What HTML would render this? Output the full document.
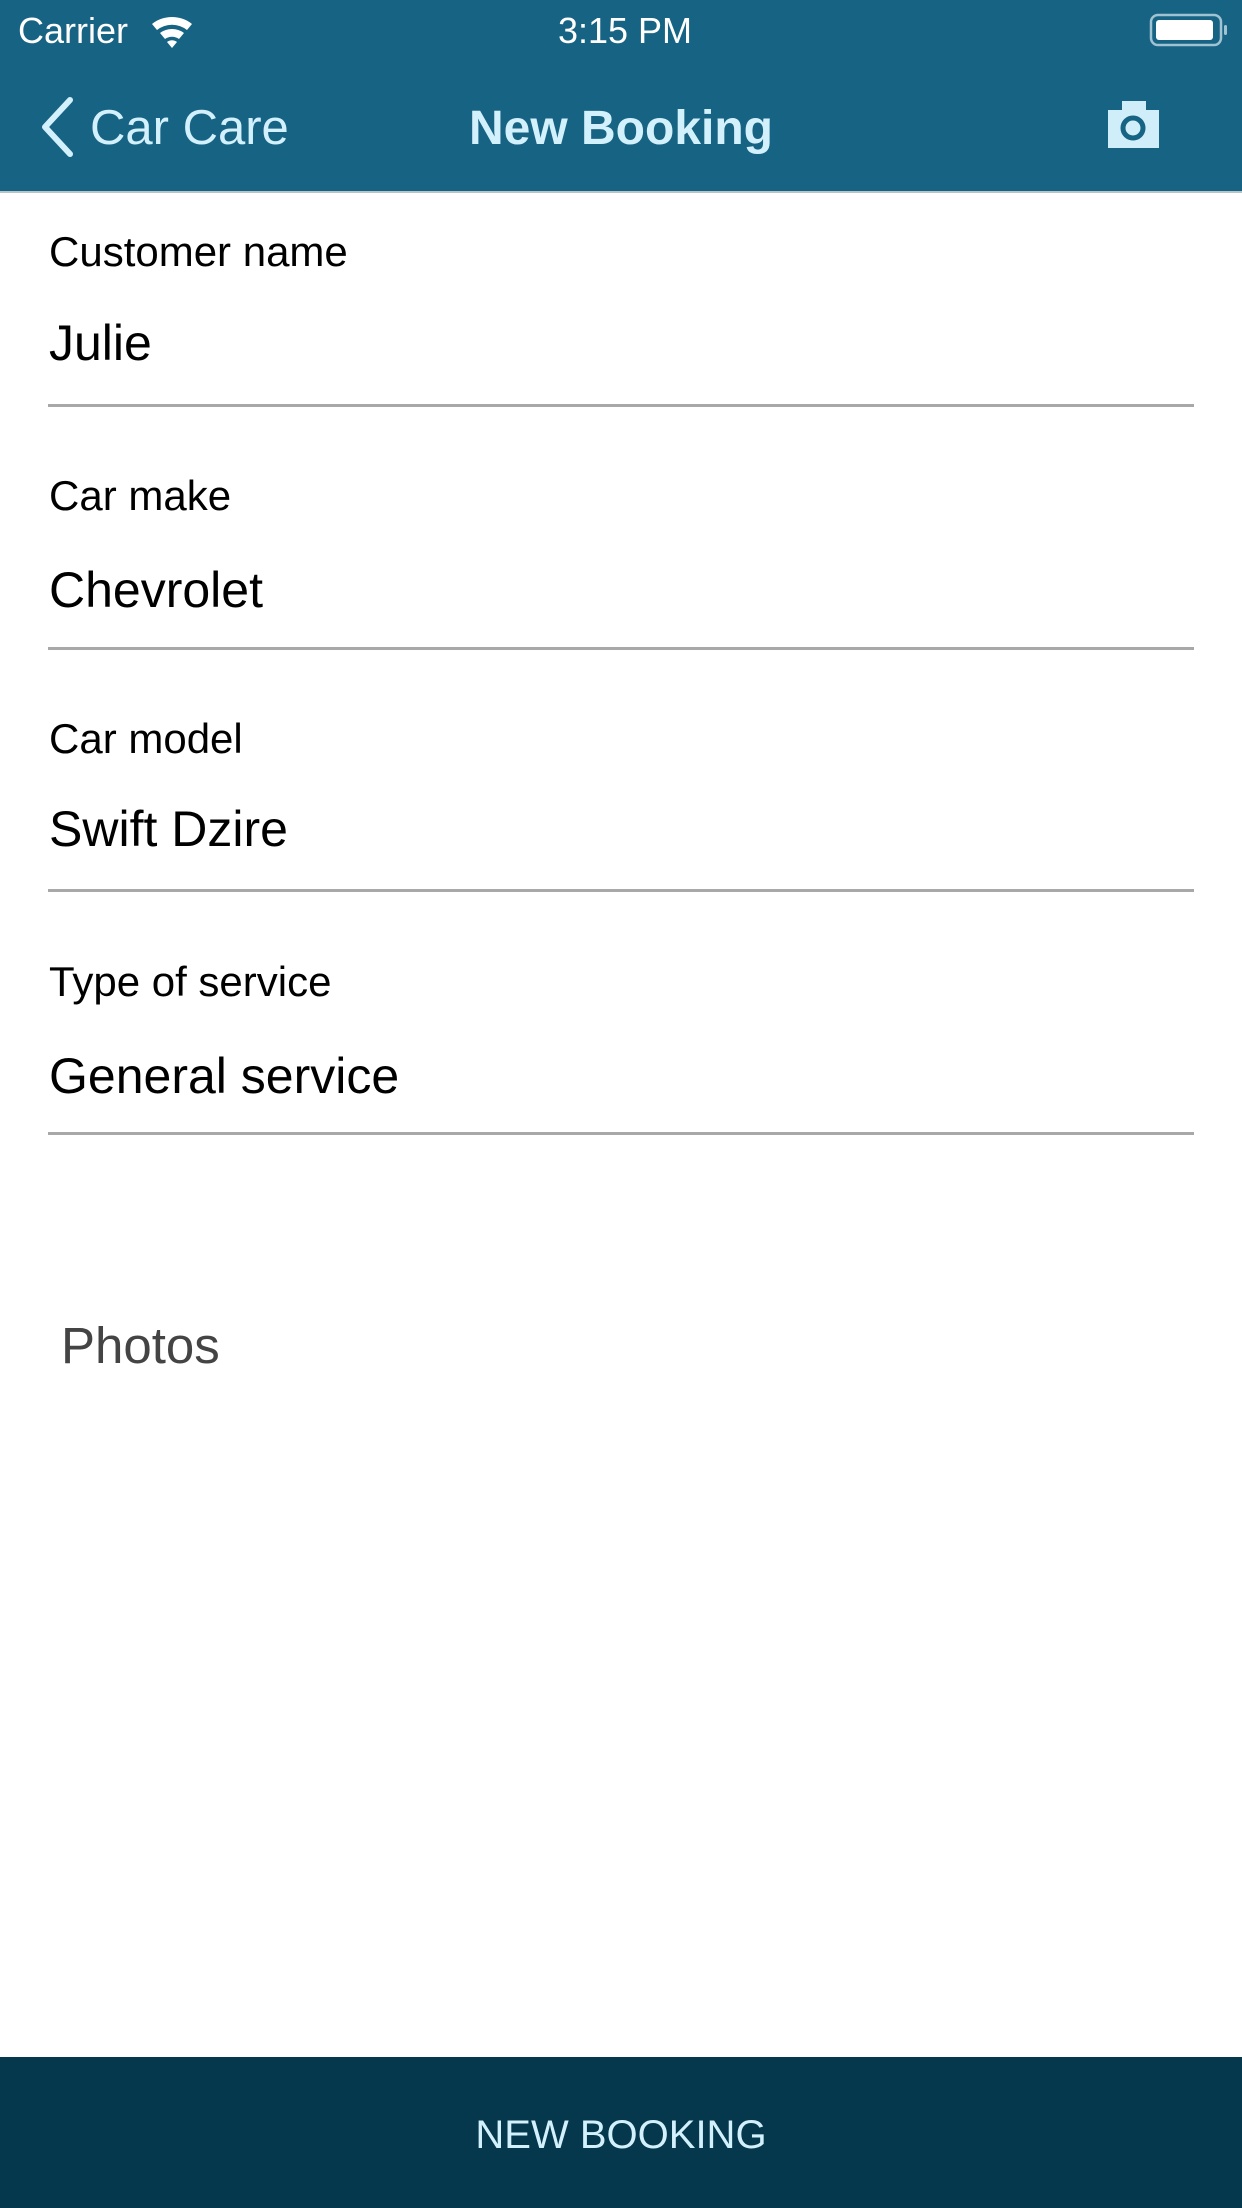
<!DOCTYPE html>
<html><head><meta charset="utf-8"><style>
html,body{margin:0;padding:0;background:#fff;}
svg{display:block;font-family:"Liberation Sans",sans-serif;}
</style></head><body>
<svg width="1242" height="2208" viewBox="0 0 1242 2208" xmlns="http://www.w3.org/2000/svg">
<rect x="0" y="0" width="1242" height="192" fill="#176383"/>
<rect x="0" y="191" width="1242" height="2" fill="#b8c4c8"/>
<text x="18" y="43" font-size="36" fill="#fff">Carrier</text>
<g fill="#fff">
<path d="M152 24 A32 32 0 0 1 192 24 L187 30 A24 24 0 0 0 157 30 Z"/>
<path d="M160 33 A20 20 0 0 1 184 33 L179 39 A12 12 0 0 0 165 39 Z"/>
<path d="M167 42 A8 8 0 0 1 177 42 L172 48 Z"/>
</g>
<text x="625" y="43" font-size="36" fill="#fff" text-anchor="middle">3:15 PM</text>
<rect x="1151" y="15" width="70" height="30" rx="7" fill="none" stroke="#9fc3d2" stroke-width="2.5"/>
<rect x="1156" y="20" width="57" height="20" rx="3" fill="#fff"/>
<rect x="1224" y="25" width="3" height="10" rx="1.5" fill="#9fc3d2"/>
<path d="M70 100 L45 127 L70 154" fill="none" stroke="#d3f1fc" stroke-width="6" stroke-linecap="round" stroke-linejoin="round"/>
<text x="90" y="144" font-size="49" fill="#d3f1fc">Car Care</text>
<text x="621" y="144" font-size="48" fill="#d3f1fc" text-anchor="middle" font-weight="bold">New Booking</text>
<rect x="1108" y="110" width="51" height="38" fill="#cfeefa"/>
<rect x="1122" y="101" width="24" height="10" fill="#cfeefa"/>
<circle cx="1133" cy="128" r="10" fill="none" stroke="#176383" stroke-width="5"/>
<g fill="#000">
<text x="49" y="266" font-size="42">Customer name</text>
<text x="49" y="360" font-size="50">Julie</text>
<text x="49" y="510" font-size="42">Car make</text>
<text x="49" y="607" font-size="50">Chevrolet</text>
<text x="49" y="753" font-size="42">Car model</text>
<text x="49" y="846" font-size="50">Swift Dzire</text>
<text x="49" y="996" font-size="42">Type of service</text>
<text x="49" y="1093" font-size="50">General service</text>
</g>
<g fill="#a8a8a8">
<rect x="48" y="404" width="1146" height="3"/>
<rect x="48" y="647" width="1146" height="3"/>
<rect x="48" y="889" width="1146" height="3"/>
<rect x="48" y="1132" width="1146" height="3"/>
</g>
<text x="61" y="1363" font-size="51" fill="#444">Photos</text>
<rect x="0" y="2057" width="1242" height="151" fill="#05384d"/>
<text x="621" y="2148" font-size="40" fill="#d3f1fc" text-anchor="middle">NEW BOOKING</text>
</svg>
</body></html>
